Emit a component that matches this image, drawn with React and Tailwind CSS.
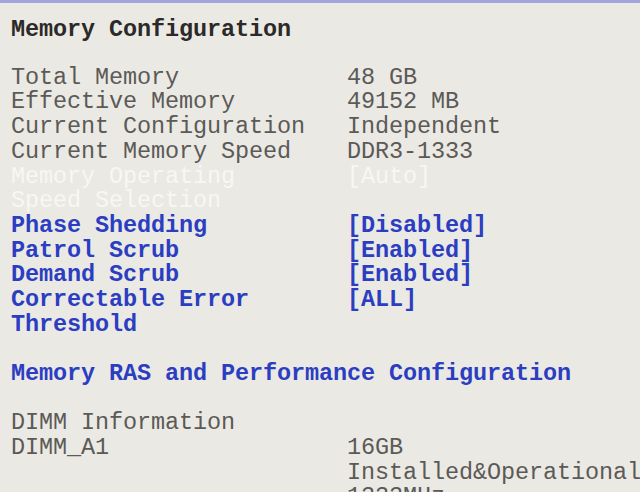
import React from "react";

const rows = [
  { label: "Total Memory", value: "48 GB", kind: "info" },
  { label: "Effective Memory", value: "49152 MB", kind: "info" },
  { label: "Current Configuration", value: "Independent", kind: "info" },
  { label: "Current Memory Speed", value: "DDR3-1333", kind: "info" },
  { label: "Memory Operating", value: "[Auto]", kind: "off" },
  { label: "Speed Selection", value: "", kind: "off" },
  { label: "Phase Shedding", value: "[Disabled]", kind: "opt" },
  { label: "Patrol Scrub", value: "[Enabled]", kind: "opt" },
  { label: "Demand Scrub", value: "[Enabled]", kind: "opt" },
  { label: "Correctable Error", value: "[ALL]", kind: "opt" },
  { label: "Threshold", value: "", kind: "opt" },
];

const colors = {
  info: "text-[#5b5a57]",
  off: "text-[#f8f7f4]",
  opt: "text-[#2b3ec2] font-bold",
};

function Row({ label, value, kind }) {
  return (
    <div className={"grid grid-cols-[336px_1fr] h-[24.7px] items-center whitespace-pre " + colors[kind]}>
      <span>{label}</span>
      <span>{value}</span>
    </div>
  );
}

export default function App() {
  return (
    <div className="w-[640px] h-[492px] overflow-hidden bg-[#ebe9e4] border-t-[3px] border-[#a3a3de] font-['Liberation_Mono',monospace] text-[23.5px] tracking-[-0.1px] leading-none pl-[11px] pt-[14px]">
      <div className="h-[24.7px] flex items-center font-bold text-[#2b2a28]">Memory Configuration</div>
      <div className="h-[23.5px]" />
      {rows.map((r) => (
        <Row key={r.label} {...r} />
      ))}
      <div className="h-[24.7px]" />
      <div className="h-[24.7px] flex items-center font-bold text-[#2b3ec2] whitespace-pre">
        Memory RAS and Performance Configuration
      </div>
      <div className="h-[24.7px]" />
      <Row label="DIMM Information" value="" kind="info" />
      <Row label="DIMM_A1" value="16GB" kind="info" />
      <Row label="" value="Installed&Operational" kind="info" />
      <Row label="" value="1333MHz" kind="info" />
    </div>
  );
}
